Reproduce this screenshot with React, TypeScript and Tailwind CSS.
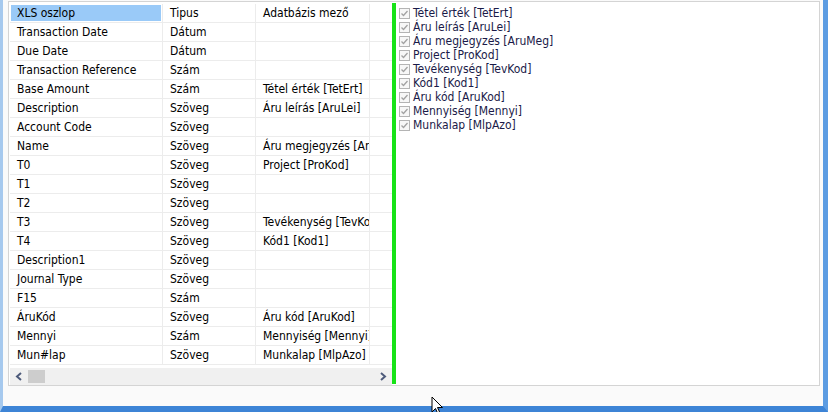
import React from "react";

// ----------------------------------------------------------
// DATA
// ----------------------------------------------------------
type MapRow = { xls: string; type: string; field: string };

const ROWS: MapRow[] = [
  { xls: "Transaction Date", type: "Dátum", field: "" },
  { xls: "Due Date", type: "Dátum", field: "" },
  { xls: "Transaction Reference", type: "Szám", field: "" },
  { xls: "Base Amount", type: "Szám", field: "Tétel érték [TetErt]" },
  { xls: "Description", type: "Szöveg", field: "Áru leírás [AruLei]" },
  { xls: "Account Code", type: "Szöveg", field: "" },
  { xls: "Name", type: "Szöveg", field: "Áru megjegyzés [AruMeg]" },
  { xls: "T0", type: "Szöveg", field: "Project [ProKod]" },
  { xls: "T1", type: "Szöveg", field: "" },
  { xls: "T2", type: "Szöveg", field: "" },
  { xls: "T3", type: "Szöveg", field: "Tevékenység [TevKod]" },
  { xls: "T4", type: "Szöveg", field: "Kód1 [Kod1]" },
  { xls: "Description1", type: "Szöveg", field: "" },
  { xls: "Journal Type", type: "Szöveg", field: "" },
  { xls: "F15", type: "Szám", field: "" },
  { xls: "ÁruKód", type: "Szöveg", field: "Áru kód [AruKod]" },
  { xls: "Mennyi", type: "Szám", field: "Mennyiség [Mennyi]" },
  { xls: "Mun#lap", type: "Szöveg", field: "Munkalap [MlpAzo]" },
];

const FIELDS = [
  "Tétel érték [TetErt]",
  "Áru leírás [AruLei]",
  "Áru megjegyzés [AruMeg]",
  "Project [ProKod]",
  "Tevékenység [TevKod]",
  "Kód1 [Kod1]",
  "Áru kód [AruKod]",
  "Mennyiség [Mennyi]",
  "Munkalap [MlpAzo]",
];

const FONT = "font-['DejaVu_Sans_Condensed','DejaVu_Sans',sans-serif] font-stretch-condensed";

// ----------------------------------------------------------
// APP
// ----------------------------------------------------------
export default function App() {
  return (
    <div className={`relative w-[828px] h-[412px] overflow-hidden ${FONT} text-[12px]`}>
      {/* window frame */}
      <div className="h-full flex flex-col border-l-[3px] border-l-[#a6c9ee] border-r-[5px] border-r-[#5c9ce2] border-b-[6px] border-b-[#3d84d6] bg-[#fafafa]">
        <div className="pl-[5px] pr-[3px] pt-[1px]">
          <div className="h-[385px] border border-[#d4d4d4] bg-white flex">
            <MappingGrid />
            <div className="w-[4px] mt-[1px] mb-[1px] bg-[#17e317]" />
            <FieldList />
          </div>
        </div>
      </div>

      <Cursor />
    </div>
  );
}

// ----------------------------------------------------------
// LEFT GRID
// ----------------------------------------------------------
function MappingGrid() {
  return (
    <div className="w-[383px] pl-[1px] pt-[2px] flex flex-col">
      <div className="h-[363px] overflow-hidden">
        {/* header */}
        <div className="flex h-[19px] border-b border-[#ececec] text-black">
          <div className="w-[153px] border-r border-[#ececec] p-[1px]">
            <div className="h-full bg-[#9acaf8] pl-[6px] leading-[17px]">XLS oszlop</div>
          </div>
          <Cell w="w-[93px]">Tipus</Cell>
          <Cell w="w-[114px]">Adatbázis mező</Cell>
          <div className="flex-1" />
        </div>

        {ROWS.map((r, i) => (
          <div key={i} className="flex h-[19px] border-b border-[#ececec] text-black">
            <Cell w="w-[153px]">{r.xls}</Cell>
            <Cell w="w-[93px]">{r.type}</Cell>
            <Cell w="w-[114px]">{r.field}</Cell>
            <div className="flex-1" />
          </div>
        ))}
      </div>

      {/* horizontal scrollbar */}
      <div className="mt-[1px] h-[17px] bg-[#f0f0f0] flex items-center">
        <div className="w-[18px] flex justify-center">
          <svg width="8" height="9" viewBox="0 0 8 9">
            <path d="M6 1 L2 4.5 L6 8" fill="none" stroke="#4d5a7a" strokeWidth="2" />
          </svg>
        </div>
        <div className="w-[17px] h-[13px] bg-[#cdcdcd]" />
        <div className="flex-1" />
        <div className="w-[18px] flex justify-center">
          <svg width="8" height="9" viewBox="0 0 8 9">
            <path d="M2 1 L6 4.5 L2 8" fill="none" stroke="#4d5a7a" strokeWidth="2" />
          </svg>
        </div>
      </div>
    </div>
  );
}

function Cell({ w, children }: { w: string; children: React.ReactNode }) {
  return (
    <div className={`${w} border-r border-[#ececec] pl-[7px] leading-[18px] whitespace-nowrap overflow-hidden`}>
      {children}
    </div>
  );
}

// ----------------------------------------------------------
// RIGHT CHECK LIST
// ----------------------------------------------------------
function FieldList() {
  return (
    <div className="flex-1 pt-[4px] pl-[3px]">
      {FIELDS.map((f) => (
        <div key={f} className="flex items-center h-[14px] text-[#1a1a48]">
          <CheckMark />
          <span className="ml-[3px] leading-[14px] whitespace-nowrap">{f}</span>
        </div>
      ))}
    </div>
  );
}

function CheckMark() {
  return (
    <svg width="11" height="11" viewBox="0 0 11 11">
      <rect x="0.5" y="0.5" width="10" height="10" fill="#f7f7f7" stroke="#b4b4b4" />
      <path d="M2.5 5.5 L4.5 7.5 L8.5 3" fill="none" stroke="#a2a2a2" strokeWidth="1.3" />
    </svg>
  );
}

// ----------------------------------------------------------
// MOUSE POINTER
// ----------------------------------------------------------
function Cursor() {
  return (
    <svg className="absolute left-[431px] top-[396px]" width="13" height="20" viewBox="0 0 13 20">
      <path d="M1 1 L1 16 L4.5 12.5 L7 18 L9 17 L6.5 11.5 L11.5 11.5 Z" fill="#ffffff" stroke="#000000" strokeWidth="1" />
    </svg>
  );
}
